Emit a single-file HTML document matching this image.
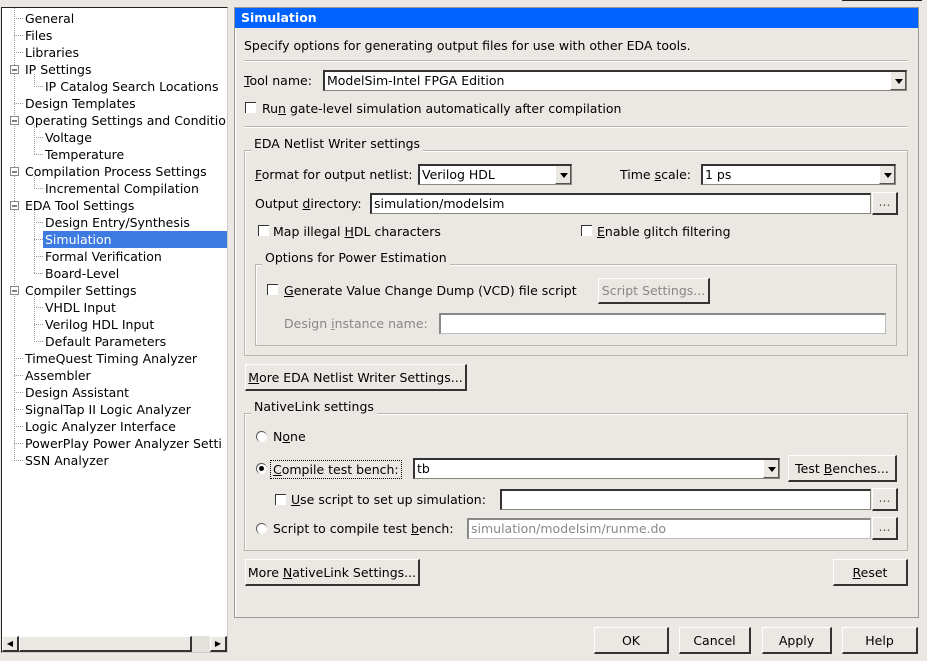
<!DOCTYPE html>
<html><head><meta charset="utf-8"><style>
*{box-sizing:border-box;margin:0;padding:0}
body{width:927px;height:661px;background:#ebe8e3;font-family:"DejaVu Sans","Liberation Sans",sans-serif;font-size:12.5px;color:#000;position:relative;overflow:hidden}
.a{position:absolute;white-space:nowrap;line-height:16px;margin-top:1px}
.tree{position:absolute;left:1px;top:7px;width:227px;height:646px;background:#fff;border:1px solid #222;border-right-color:#ccc;border-bottom-color:#ccc}
.t{position:absolute;white-space:nowrap;line-height:16px;margin-top:1px}
.box{position:absolute;border:1px solid #b8b5ae;box-shadow:inset 1px 1px 0 #fff}
.sep{position:absolute;height:2px;border-top:1px solid #b8b5ae;border-bottom:1px solid #fff}
.in{position:absolute;background:#fff;border:1px solid #8a877f;border-top:2px solid #333;border-left:2px solid #333;padding-left:2px;line-height:17px;white-space:nowrap}
.btn{position:absolute;background:#ebe8e3;border:1px solid #fff;border-right:2px solid #333;border-bottom:2px solid #333;text-align:center;white-space:nowrap}
.dd{position:absolute;right:0;top:0;width:16px;height:100%;background:#ebe8e3;border-left:1px solid #fff;border-right:1px solid #555;border-bottom:1px solid #555}
.dd:after{content:"";position:absolute;left:4px;top:7px;border-left:4px solid transparent;border-right:4px solid transparent;border-top:5px solid #000}
.cb{position:absolute;width:11px;height:11px;background:#fff;border-top:1px solid #333;border-left:1px solid #333}
.rb{position:absolute;width:11px;height:11px;border-radius:50%;background:#fff;border-top:1px solid #555;border-left:1px solid #555}
.gl{position:absolute;background:#ebe8e3;padding:0 3px;line-height:16px;white-space:nowrap;margin-top:1px}
u{text-decoration:underline}
.g{color:#888}
</style></head><body>
<div style="position:absolute;left:842px;top:0;width:80px;height:1px;background:#222"></div>
<div class="tree">
<svg style="position:absolute;left:0;top:0" width="226" height="640">
<g stroke="#999" stroke-dasharray="1,1" fill="none">
<line x1="12.5" y1="0" x2="12.5" y2="453"/>
<line x1="12" y1="10.5" x2="22" y2="10.5"/><line x1="12" y1="27.5" x2="22" y2="27.5"/><line x1="12" y1="44.5" x2="22" y2="44.5"/>
<line x1="12" y1="95.5" x2="22" y2="95.5"/>
<line x1="12" y1="350.5" x2="22" y2="350.5"/><line x1="12" y1="367.5" x2="22" y2="367.5"/><line x1="12" y1="384.5" x2="22" y2="384.5"/><line x1="12" y1="401.5" x2="22" y2="401.5"/><line x1="12" y1="418.5" x2="22" y2="418.5"/><line x1="12" y1="435.5" x2="22" y2="435.5"/><line x1="12" y1="452.5" x2="22" y2="452.5"/>
<line x1="32.5" y1="66" x2="32.5" y2="78"/><line x1="32" y1="78.5" x2="42" y2="78.5"/>
<line x1="32.5" y1="117" x2="32.5" y2="146"/><line x1="32" y1="129.5" x2="42" y2="129.5"/><line x1="32" y1="146.5" x2="42" y2="146.5"/>
<line x1="32.5" y1="168" x2="32.5" y2="180"/><line x1="32" y1="180.5" x2="42" y2="180.5"/>
<line x1="32.5" y1="202" x2="32.5" y2="265"/><line x1="32" y1="214.5" x2="42" y2="214.5"/><line x1="32" y1="231.5" x2="42" y2="231.5"/><line x1="32" y1="248.5" x2="42" y2="248.5"/><line x1="32" y1="265.5" x2="42" y2="265.5"/>
<line x1="32.5" y1="287" x2="32.5" y2="333"/><line x1="32" y1="299.5" x2="42" y2="299.5"/><line x1="32" y1="316.5" x2="42" y2="316.5"/><line x1="32" y1="333.5" x2="42" y2="333.5"/>
</g>
<g fill="#fff" stroke="#888">
<rect x="8.5" y="57.5" width="8" height="8"/><rect x="8.5" y="108.5" width="8" height="8"/><rect x="8.5" y="159.5" width="8" height="8"/><rect x="8.5" y="193.5" width="8" height="8"/><rect x="8.5" y="278.5" width="8" height="8"/>
</g>
<g stroke="#000"><line x1="10" y1="62" x2="15" y2="62"/><line x1="10" y1="113" x2="15" y2="113"/><line x1="10" y1="164" x2="15" y2="164"/><line x1="10" y1="198" x2="15" y2="198"/><line x1="10" y1="283" x2="15" y2="283"/></g>
</svg>
<div class="t" style="left:23px;top:2px">General</div>
<div class="t" style="left:23px;top:19px">Files</div>
<div class="t" style="left:23px;top:36px">Libraries</div>
<div class="t" style="left:23px;top:53px">IP Settings</div>
<div class="t" style="left:43px;top:70px">IP Catalog Search Locations</div>
<div class="t" style="left:23px;top:87px">Design Templates</div>
<div class="t" style="left:23px;top:104px">Operating Settings and Conditio</div>
<div class="t" style="left:43px;top:121px">Voltage</div>
<div class="t" style="left:43px;top:138px">Temperature</div>
<div class="t" style="left:23px;top:155px">Compilation Process Settings</div>
<div class="t" style="left:43px;top:172px">Incremental Compilation</div>
<div class="t" style="left:23px;top:189px">EDA Tool Settings</div>
<div class="t" style="left:43px;top:206px">Design Entry/Synthesis</div>
<div style="position:absolute;left:41px;top:223px;width:184px;height:17px;background:#3d7be0"></div>
<div class="t" style="left:43px;top:223px;color:#fff">Simulation</div>
<div class="t" style="left:43px;top:240px">Formal Verification</div>
<div class="t" style="left:43px;top:257px">Board-Level</div>
<div class="t" style="left:23px;top:274px">Compiler Settings</div>
<div class="t" style="left:43px;top:291px">VHDL Input</div>
<div class="t" style="left:43px;top:308px">Verilog HDL Input</div>
<div class="t" style="left:43px;top:325px">Default Parameters</div>
<div class="t" style="left:23px;top:342px">TimeQuest Timing Analyzer</div>
<div class="t" style="left:23px;top:359px">Assembler</div>
<div class="t" style="left:23px;top:376px">Design Assistant</div>
<div class="t" style="left:23px;top:393px">SignalTap II Logic Analyzer</div>
<div class="t" style="left:23px;top:410px">Logic Analyzer Interface</div>
<div class="t" style="left:23px;top:427px">PowerPlay Power Analyzer Setti</div>
<div class="t" style="left:23px;top:444px">SSN Analyzer</div>
<div style="position:absolute;left:0;top:628px;width:225px;height:16px;background:#e4e2dd">
<div class="btn" style="left:0;top:0;width:17px;height:16px;font-size:8px;line-height:13px">◀</div>
<div class="btn" style="left:17px;top:0;width:173px;height:16px"></div>
<div class="btn" style="left:208px;top:0;width:17px;height:16px;font-size:8px;line-height:13px">▶</div>
</div>
</div>

<div class="box" style="left:234px;top:7px;width:685px;height:611px;border-color:#999"></div>
<div style="position:absolute;left:235px;top:8px;width:683px;height:20px;background:#0062ff;color:#fff;font-weight:bold;line-height:20px;padding-left:6px">Simulation</div>
<div class="a" style="left:244px;top:37px">Specify options for generating output files for use with other EDA tools.</div>
<div class="sep" style="left:244px;top:60px;width:664px"></div>
<div class="a" style="left:244px;top:72px"><u>T</u>ool name:</div>
<div class="in" style="left:323px;top:70px;width:584px;height:21px">ModelSim-Intel FPGA Edition<div class="dd"></div></div>
<div class="cb" style="left:245px;top:102px"></div>
<div class="a" style="left:262px;top:100px">Ru<u>n</u> gate-level simulation automatically after compilation</div>
<div class="sep" style="left:244px;top:126px;width:664px"></div>

<div class="box" style="left:244px;top:150px;width:664px;height:206px"></div>
<div class="gl" style="left:251px;top:135px">EDA Netlist Writer settings</div>
<div class="a" style="left:255px;top:166px"><u>F</u>ormat for output netlist:</div>
<div class="in" style="left:418px;top:164px;width:154px;height:21px">Verilog HDL<div class="dd"></div></div>
<div class="a" style="left:620px;top:166px">Time <u>s</u>cale:</div>
<div class="in" style="left:701px;top:164px;width:195px;height:21px">1 ps<div class="dd"></div></div>
<div class="a" style="left:255px;top:195px">Output <u>d</u>irectory:</div>
<div class="in" style="left:370px;top:193px;width:501px;height:21px">simulation/modelsim</div>
<div class="btn" style="left:872px;top:192px;width:26px;height:23px;line-height:18px;color:#555">...</div>
<div class="cb" style="left:258px;top:225px"></div>
<div class="a" style="left:273px;top:223px">Map illegal <u>H</u>DL characters</div>
<div class="cb" style="left:581px;top:225px"></div>
<div class="a" style="left:597px;top:223px"><u>E</u>nable glitch filtering</div>

<div class="box" style="left:255px;top:264px;width:642px;height:82px"></div>
<div class="gl" style="left:262px;top:249px">Options for Power Estimation</div>
<div class="cb" style="left:267px;top:284px"></div>
<div class="a" style="left:284px;top:282px"><u>G</u>enerate Value Change Dump (VCD) file script</div>
<div class="btn" style="left:598px;top:278px;width:112px;height:26px;line-height:24px;color:#888">Script Settings...</div>
<div class="a g" style="left:284px;top:315px">Design <u>i</u>nstance name:</div>
<div class="in" style="left:439px;top:313px;width:447px;height:21px;border-color:#bbb;border-top-color:#888;border-left-color:#888"></div>

<div class="btn" style="left:245px;top:364px;width:222px;height:27px;line-height:25px"><u>M</u>ore EDA Netlist Writer Settings...</div>

<div class="box" style="left:244px;top:413px;width:664px;height:138px"></div>
<div class="gl" style="left:251px;top:398px">NativeLink settings</div>
<div class="rb" style="left:256px;top:431px"></div>
<div class="a" style="left:273px;top:428px">N<u>o</u>ne</div>
<div class="rb" style="left:256px;top:463px"></div>
<div style="position:absolute;left:259px;top:466px;width:5px;height:5px;border-radius:50%;background:#000"></div>
<div class="a" style="left:270px;top:459px;border:1px dotted #000;padding:0 2px;height:19px;line-height:17px"><u>C</u>ompile test bench:</div>
<div class="in" style="left:413px;top:458px;width:367px;height:21px">tb<div class="dd"></div></div>
<div class="btn" style="left:788px;top:455px;width:109px;height:27px;line-height:25px">Test <u>B</u>enches...</div>
<div class="cb" style="left:275px;top:494px"></div>
<div class="a" style="left:291px;top:491px"><u>U</u>se script to set up simulation:</div>
<div class="in" style="left:500px;top:489px;width:371px;height:21px"></div>
<div class="btn" style="left:872px;top:488px;width:26px;height:23px;line-height:18px;color:#555">...</div>
<div class="rb" style="left:256px;top:523px"></div>
<div class="a" style="left:273px;top:520px">Script to compile test <u>b</u>ench:</div>
<div class="in g" style="left:467px;top:518px;width:404px;height:21px;border-color:#bbb;border-top-color:#888;border-left-color:#888">simulation/modelsim/runme.do</div>
<div class="btn" style="left:872px;top:517px;width:26px;height:23px;line-height:18px;color:#555">...</div>

<div class="btn" style="left:245px;top:559px;width:175px;height:27px;line-height:25px">More <u>N</u>ativeLink Settings...</div>
<div class="btn" style="left:833px;top:559px;width:75px;height:27px;line-height:25px"><u>R</u>eset</div>

<div class="btn" style="left:594px;top:627px;width:75px;height:27px;line-height:25px">OK</div>
<div class="btn" style="left:679px;top:627px;width:72px;height:27px;line-height:25px">Cancel</div>
<div class="btn" style="left:762px;top:627px;width:70px;height:27px;line-height:25px">Apply</div>
<div class="btn" style="left:842px;top:627px;width:76px;height:27px;line-height:25px">Help</div>
</body></html>
